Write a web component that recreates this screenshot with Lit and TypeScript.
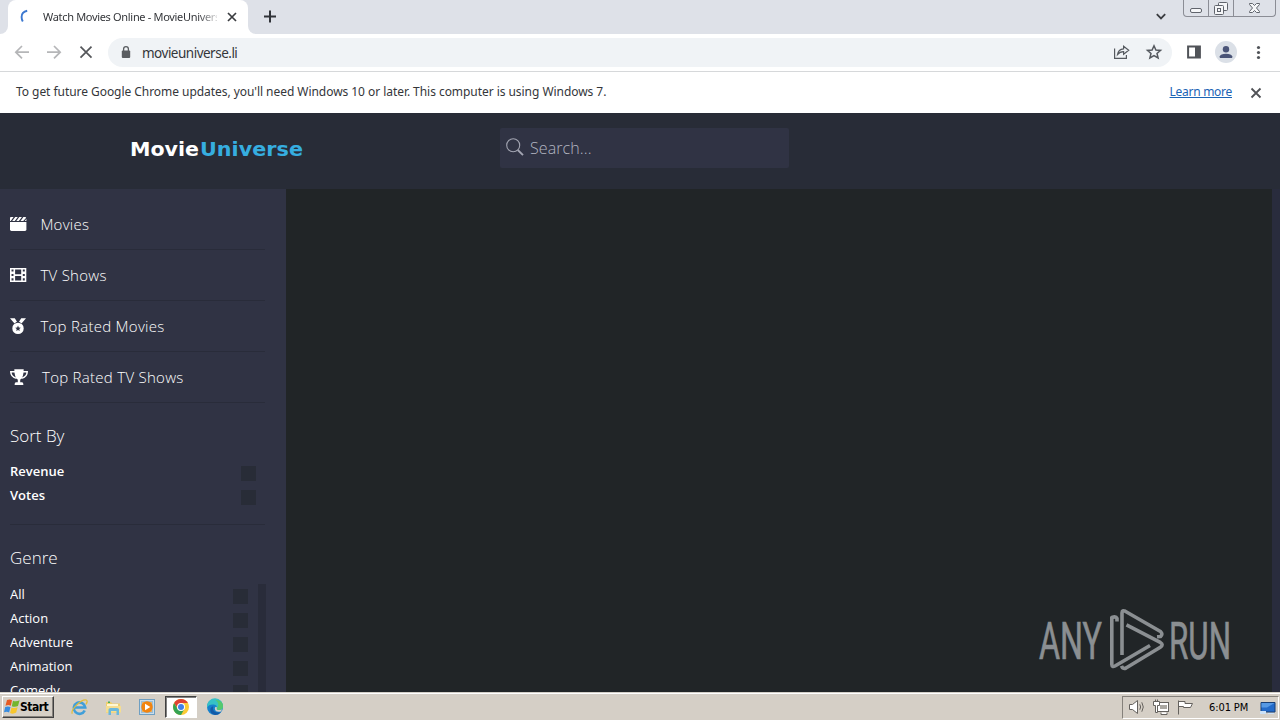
import {LitElement, html, css, svg} from 'lit';
import {customElement, property} from 'lit/decorators.js';

const menuIcons: Record<string, unknown> = {
  movies: svg`
    <path d="M0 4.9H16.4V12.6Q16.4 14 15 14H1.4Q0 14 0 12.6Z"/>
    <path d="M1 0H3.6L.7 3.9H0V1Q0 0 1 0ZM5.2 0H7.8L4.8 3.9H2.2ZM9.3 0H11.9L8.9 3.9H6.3ZM13.4 0H15.4L16.2.7 13.2 3.9H10.5ZM16.4 1.8V3.9H14.8Z"/>`,
  tv: svg`
    <path fill-rule="evenodd" d="M0 0H16.3V14H0ZM1.5 1.6V3.6H3.5V1.6ZM1.5 5.9V8H3.5V5.9ZM1.5 10.3V12.4H3.5V10.3ZM12.8 1.6V3.6H14.8V1.6ZM12.8 5.9V8H14.8V5.9ZM12.8 10.3V12.4H14.8V10.3ZM5.1 1.6V6.2H11.2V1.6ZM5.1 7.9V12.4H11.2V7.9Z"/>`,
  medal: svg`
    <path d="M0-.8H4.8L7 2.8Q5.6 3.3 4.5 4.4ZM11.2-.8H16L11.5 4.4Q10.4 3.3 9 2.8Z"/>
    <path fill-rule="evenodd" d="M8 3.7A5.7 5.7 0 1 1 8 15.1 5.7 5.7 0 0 1 8 3.7ZM8 6.6L7.2 8.5 5.2 8.7 6.7 10 6.3 12 8 11 9.7 12 9.3 10 10.8 8.7 8.8 8.5Z"/>`,
  trophy: svg`
    <path d="M4.3-.7H13.7Q13.6 8.2 10.2 9.7V12.2H12.2Q13.4 12.4 13.4 15H4.6Q4.6 12.4 5.8 12.2H7.8V9.7Q4.4 8.2 4.3-.7Z"/>
    <path d="M5 1.7H.8Q.8 6.8 6.6 8.4M13 1.7H17.2Q17.2 6.8 11.4 8.4" fill="none" stroke="#fff" stroke-width="1.5"/>`,
};

const links = [
  {icon: 'movies', label: 'Movies', width: 16.4},
  {icon: 'tv', label: 'TV Shows', width: 16.4},
  {icon: 'medal', label: 'Top Rated Movies', width: 16.4},
  {icon: 'trophy', label: 'Top Rated TV Shows', width: 18},
];

const sorts = ['Revenue', 'Votes'];
const genres = ['All', 'Action', 'Adventure', 'Animation', 'Comedy'];

@customElement('browser-chrome')
export class BrowserChrome extends LitElement {
  @property() tabTitle = '';
  @property() address = '';

  static styles = css`
    :host {
      display: block;
      flex: none;
      font-family: "Noto Sans", sans-serif;
      color: #34363a;
    }
    svg {
      display: block;
      flex: none;
      overflow: visible;
    }
    .tabs {
      height: 34px;
      background: #dee1e8;
      display: flex;
    }
    .before,
    .after {
      width: 8px;
      background: #fff;
    }
    .before i,
    .after i {
      display: block;
      height: 34px;
      background: #dee1e8;
    }
    .before i {
      border-bottom-right-radius: 8px;
    }
    .after i {
      border-bottom-left-radius: 8px;
    }
    .tab {
      width: 240px;
      box-sizing: border-box;
      padding: 0 11px 0 11px;
      background: #fff;
      border-radius: 8px 8px 0 0;
      display: flex;
      align-items: center;
    }
    .title {
      width: 174px;
      margin: 0 10px 0 8px;
      padding-bottom: 1px;
      white-space: nowrap;
      overflow: hidden;
      font-size: 11px;
      letter-spacing: -0.32px;
      -webkit-mask-image: linear-gradient(90deg, #000 155px, transparent 178px);
      mask-image: linear-gradient(90deg, #000 155px, transparent 178px);
    }
    .plus {
      margin: 10px 0 0 8px;
    }
    .grow {
      flex: 1;
    }
    .caret {
      margin: 12px 17px 0 0;
    }
    .window {
      width: 91px;
      height: 16px;
      margin-right: 4px;
      border: 1px solid #8b8d95;
      border-top: 0;
      border-radius: 0 0 4px 4px;
      display: flex;
    }
    .toolbar {
      height: 37px;
      background: #fff;
      border-bottom: 1px solid #d6d8da;
      display: flex;
      align-items: center;
    }
    .nav {
      width: 108px;
    }
    .omnibox {
      width: 1064px;
      height: 29px;
      box-sizing: border-box;
      padding: 0 10px 0 12px;
      border-radius: 15px;
      background: #f0f3f6;
      display: flex;
      align-items: center;
    }
    .address {
      margin-left: 10px;
      font-size: 13.5px;
      letter-spacing: -0.5px;
      flex: 1;
    }
    .infobar {
      height: 41px;
      box-sizing: border-box;
      background: #fff;
      padding: 0 19px 0 16px;
      display: flex;
      align-items: center;
      font-size: 12px;
    }
    .message {
      flex: 1;
      letter-spacing: -0.05px;
      padding-bottom: 2px;
    }
    .more {
      color: #1b63b5;
      text-decoration: underline;
      margin-right: 19px;
      padding-bottom: 2px;
      letter-spacing: -0.28px;
    }
  `;

  render() {
    return html`
      <div class="tabs">
        <div class="before"><i></i></div>
        <div class="tab">
          <svg width="16" height="16" viewBox="0 0 16 16"><path d="M8.2 1.8Q2.6 3 2.6 8 2.6 10.5 3.8 12.4" fill="none" stroke="#3c78d0" stroke-width="1.9"/></svg>
          <div class="title">${this.tabTitle}</div>
          <svg width="10" height="10" viewBox="0 0 10 10"><path d="M1 1L9 9M9 1L1 9" stroke="#3a3c40" stroke-width="1.7"/></svg>
        </div>
        <div class="after"><i></i></div>
        <svg class="plus" width="12" height="12" viewBox="0 0 12 12"><path d="M6 .5V12.5M0 6.5H12" stroke="#303338" stroke-width="2"/></svg>
        <div class="grow"></div>
        <svg class="caret" width="10" height="8" viewBox="0 0 10 8"><path d="M.8 2.2L5 6.4 9.2 2.2" fill="none" stroke="#3a3c40" stroke-width="1.8"/></svg>
        <div class="window">
          <svg width="91" height="16" viewBox="0 0 91 16" fill="#f5f6f8" stroke="#60646c">
            <path d="M24.5 0V16M49.5 0V16" stroke="#8b8d95"/>
            <rect x="6.5" y="8.5" width="11" height="4" rx="1.5"/>
            <rect x="34.5" y="2.5" width="9" height="8" rx="1"/>
            <rect x="30.5" y="5.5" width="9" height="9" rx="1"/>
            <rect x="33.5" y="8.5" width="3" height="3"/>
            <path d="M65.5 3.5H68.5L70.5 5.5 72.5 3.5H75.5V4.5L72.5 8 75.5 11.5V12.5H72.5L70.5 10.5 68.5 12.5H65.5V11.5L68.5 8 65.5 4.5Z"/>
          </svg>
        </div>
      </div>
      <div class="toolbar">
        <svg class="nav" width="108" height="37" viewBox="0 0 108 37" fill="none" stroke-width="1.7">
          <path d="M29 18.2H16M22 12L15.8 18.2 22 24.4M47 18.2H60M54 12L60.2 18.2 54 24.4" stroke="#b5b6b8"/>
          <path d="M80.5 12.7L91.5 23.7M91.5 12.7L80.5 23.7" stroke="#55575b"/>
        </svg>
        <div class="omnibox">
          <svg width="12" height="14" viewBox="0 0 12 14"><rect x="1.8" y="4.5" width="8.4" height="7.5" rx="1" fill="#5a5d61"/><path d="M3.6 5V3A2.4 2.4 0 0 1 8.4 3V5" fill="none" stroke="#5a5d61" stroke-width="1.3"/></svg>
          <span class="address">${this.address}</span>
          <svg width="48" height="18" viewBox="0 0 48 18" fill="none" stroke="#55595f" stroke-width="1.2">
            <path d="M.6 4.5V14.4H12.4V11M3.5 10.5Q4.3 5.2 9.6 4.8V2.2L14.7 6.3 9.6 10.2V7.7Q5.8 7.7 3.5 10.5Z"/>
            <path d="M40 1.8L41.9 6 46.5 6.4 43 9.4 44.1 13.9 40 11.5 35.9 13.9 37 9.4 33.5 6.4 38.1 6Z" stroke-width="1.5"/>
          </svg>
        </div>
        <svg width="108" height="37" viewBox="0 0 108 37">
          <path d="M16.1 12.4H27.9V23.6H16.1Z" fill="none" stroke="#505358" stroke-width="2"/><path d="M23 12H28V24H23Z" fill="#505358"/>
          <circle cx="54" cy="18" r="11" fill="#dbe0e7"/>
          <circle cx="54" cy="15.2" r="3.2" fill="#4b5578"/><path d="M47.8 24V22.2Q48.5 19.7 54 19.7T60.2 22.2V24Z" fill="#4b5578"/>
          <g fill="#505358"><circle cx="86.5" cy="13.5" r="1.6"/><circle cx="86.5" cy="18.5" r="1.6"/><circle cx="86.5" cy="23.5" r="1.6"/></g>
        </svg>
      </div>
      <div class="infobar">
        <span class="message">To get future Google Chrome updates, you'll need Windows 10 or later. This computer is using Windows 7.</span>
        <span class="more">Learn more</span>
        <svg width="10" height="10" viewBox="0 0 10 10"><path d="M.5.5L9.5 9.5M9.5.5L.5 9.5" stroke="#505256" stroke-width="1.8"/></svg>
      </div>
    `;
  }
}

@customElement('movie-page')
export class MoviePage extends LitElement {
  static styles = css`
    :host {
      display: flex;
      flex-direction: column;
      flex: 1;
      min-height: 0;
      background: #212527;
      color: #fff;
      font-family: "Open Sans", "Noto Sans", sans-serif;
      font-weight: 300;
    }
    svg {
      display: block;
      overflow: visible;
      flex: none;
    }
    .header {
      height: 76px;
      flex: none;
      background: #282c37;
      display: flex;
      align-items: flex-start;
    }
    .logo {
      margin: 22px 196px 0 130px;
    }
    .logo text {
      font: bold 20px "DejaVu Sans", sans-serif;
    }
    .search {
      width: 289px;
      height: 40px;
      margin-top: 15px;
      box-sizing: border-box;
      padding-left: 6px;
      background: #303344;
      border-radius: 2px;
      display: flex;
      align-items: center;
      gap: 6px;
      color: #b3b6c1;
      font-size: 16px;
      letter-spacing: 0.1px;
    }
    .body {
      flex: 1;
      min-height: 0;
      display: flex;
    }
    .sidebar {
      width: 286px;
      box-sizing: border-box;
      padding: 10px 20px 0 10px;
      background: #303344;
      overflow: hidden;
    }
    .link {
      height: 50px;
      margin-right: 1px;
      display: flex;
      align-items: center;
      gap: 14px;
      border-bottom: 1px solid #292c3a;
      font-size: 15px;
      letter-spacing: 0.28px;
    }
    .heading {
      height: 24px;
      line-height: 24px;
      font-size: 17px;
      padding: 21px 0 11px;
    }
    .sorts {
      height: 65px;
      margin-right: 1px;
      padding-right: 9px;
      border-bottom: 1px solid #292c3a;
      font-weight: 600;
    }
    .row {
      height: 24px;
      display: flex;
      align-items: center;
      justify-content: space-between;
      font-size: 13px;
    }
    .box {
      width: 15px;
      height: 15px;
      margin-top: 4px;
      background: #282c37;
    }
    .genres {
      height: 108px;
      margin-top: 3px;
      padding-right: 10px;
      border-right: 8px solid #292c3a;
      font-weight: 400;
      overflow: hidden;
    }
    .genres .row:first-child {
      margin-top: -2px;
    }
    .main {
      flex: 1;
      display: flex;
      align-items: flex-end;
      justify-content: flex-end;
    }
    .mark {
      margin: 0 40px 19px 0;
      fill: #8b8f92;
      stroke: #8b8f92;
    }
    .mark text {
      font: 52px Roboto, sans-serif;
      stroke-width: 0.7px;
    }
    .scrollbar {
      width: 8px;
      background: #292c3d;
    }
  `;

  row(label: string) {
    return html`<div class="row"><span>${label}</span><i class="box"></i></div>`;
  }

  render() {
    return html`
      <div class="header">
        <svg class="logo" width="174" height="28" viewBox="0 0 174 28">
          <text x="0" y="21" fill="#fff" textLength="69" lengthAdjust="spacingAndGlyphs">Movie</text>
          <text x="70" y="21" fill="#36aee0" textLength="103" lengthAdjust="spacingAndGlyphs">Universe</text>
        </svg>
        <div class="search">
          <svg width="18" height="20" viewBox="0 0 18 20" fill="none" stroke="#a3a5b2"><circle cx="7.2" cy="7.3" r="6.5" stroke-width="1.1"/><path d="M11.8 12L17 17.2" stroke-width="1.9"/></svg>
          <span>Search...</span>
        </div>
      </div>
      <div class="body">
        <div class="sidebar">
          ${links.map((link) => html`
            <div class="link">
              <svg width=${link.width} height="15" fill="#fff">${menuIcons[link.icon]}</svg>
              <span>${link.label}</span>
            </div>
          `)}
          <div class="heading">Sort By</div>
          <div class="sorts">${sorts.map((name) => this.row(name))}</div>
          <div class="heading">Genre</div>
          <div class="genres">${genres.map((name) => this.row(name))}</div>
        </div>
        <div class="main">
          <svg class="mark" width="194" height="64" viewBox="0 0 194 64">
            <text x="1" y="49.5" textLength="63" lengthAdjust="spacingAndGlyphs">ANY</text>
            <text x="131" y="49.5" textLength="62" lengthAdjust="spacingAndGlyphs">RUN</text>
            <g fill="none" stroke-width="3.6" stroke-linejoin="round">
              <path d="M79 12.5V9.5Q78 7 73.8 8.5V55.5Q74 58.6 77 57L112 36.5"/>
              <path d="M84 46V4Q84.2 .6 87.2 2.2L122.5 22.5Q125.3 25.2 122.5 27.5L119 27.7"/>
              <path d="M88.5 15.8L122.3 33.4Q126 35.8 122.3 38.2L88 59Q84.8 60.5 83.5 56.8"/>
            </g>
          </svg>
        </div>
        <div class="scrollbar"></div>
      </div>
    `;
  }
}

@customElement('task-bar')
export class TaskBar extends LitElement {
  static styles = css`
    :host {
      height: 27px;
      flex: none;
      display: flex;
      align-items: center;
      box-sizing: border-box;
      border-top: 1px solid #fff;
      box-shadow: 0 -1px #d4d0c8;
      margin-top: 1px;
      background: #d5cfc6;
      color: #000;
      font-family: "DejaVu Sans Condensed", "DejaVu Sans", sans-serif;
      padding-left: 2px;
    }
    svg {
      display: block;
      flex: none;
      overflow: visible;
    }
    .start {
      width: 52px;
      height: 22px;
      box-sizing: border-box;
      border: 1px solid #fff;
      border-right-color: #404040;
      border-bottom-color: #404040;
      box-shadow: inset -1px -1px #86827c;
      padding-left: 1px;
      display: flex;
      align-items: center;
      font-weight: bold;
      font-size: 12px;
      letter-spacing: -0.5px;
    }
    .apps {
      display: flex;
      align-items: center;
      margin-left: 9px;
    }
    .app {
      width: 32px;
      height: 22px;
      box-sizing: border-box;
      margin-right: 2px;
      display: flex;
      align-items: center;
      justify-content: center;
    }
    .active {
      background: #fff;
      border: 1px solid #404040;
      border-right-color: #fff;
      border-bottom-color: #fff;
      box-shadow: inset 1px 1px #808080;
    }
    .grow {
      flex: 1;
    }
    .tray {
      width: 157px;
      height: 23px;
      box-sizing: border-box;
      border: 1px solid #85817b;
      border-right-color: #fff;
      border-bottom-color: #fff;
      display: flex;
      align-items: center;
      padding-left: 6px;
      margin-right: 1px;
      font-size: 11px;
    }
    .clock {
      width: 41px;
      margin: 0 10px 0 14px;
      white-space: nowrap;
      letter-spacing: -0.1px;
    }
  `;

  render() {
    return html`
      <div class="start">
        <svg width="16" height="16" viewBox="0 0 16 16">
          <path d="M3 1Q6-.3 8 1.3L6.8 6.8Q4.5 5.4 1.5 6.8Z" fill="#e65a22"/>
          <path d="M9 1.7Q12 3 15.6 1.3L14 7Q11 8.5 7.8 7.2Z" fill="#73b52e"/>
          <path d="M1.2 8Q4 6.8 6.5 8.1L5.1 13.6Q3 12.1 0 13.3Z" fill="#378ce0"/>
          <path d="M7.5 8.5Q10.5 9.8 13.6 8.3L12.2 13.6Q9.2 15.4 6.1 14.1Z" fill="#f7c62d"/>
        </svg>
        <span>Start</span>
      </div>
      <div class="apps">
        <div class="app">
          <svg width="17" height="17" viewBox="0 0 17 17" fill="none">
            <path d="M13.7 11.5A5.7 5.7 0 1 1 14.2 8.5H4" stroke="#419fd9" stroke-width="2.7"/>
            <path d="M1.2 14.8C-.8 11 10.6-.5 15.3 1Q17.2 2 14.9 5.3" stroke="#e3bd39" stroke-width="1.3"/>
          </svg>
        </div>
        <div class="app">
          <svg width="17" height="17" viewBox="0 0 17 17">
            <path d="M1 3H6L7.5 4.5H15V14H1Z" fill="#eecf70"/><path d="M3 2.5H5V4H3Z" fill="#49ad58"/>
            <path d="M2 5H13V7H2Z" fill="#fff7d2"/><path d="M1 7H16V13.5H1Z" fill="#f5dd91"/>
            <path d="M3.5 16V10.5Q3.5 9 5.5 9H12Q14 9 14 10.5V16H11.5V12H6V16Z" fill="#6bb8dc"/>
          </svg>
        </div>
        <div class="app">
          <svg width="16" height="16" viewBox="0 0 16 16">
            <rect x=".5" y=".5" width="15" height="15" fill="#c8ddec" stroke="#6f9fc2"/>
            <rect x="2.5" y="2.5" width="11" height="11" fill="#e9b266" stroke="#9bbdd6"/>
            <circle cx="8" cy="8" r="5.7" fill="#f18410"/><path d="M6 4.8L11.3 8 6 11.2Z" fill="#fff"/>
          </svg>
        </div>
        <div class="app active">
          <svg width="16" height="16" viewBox="0 0 16 16">
            <circle cx="8" cy="8" r="8" fill="#fccb35"/>
            <path d="M1.1 4A8 8 0 0 1 14.9 4H8L5 9.8Z" fill="#df4234"/>
            <path d="M1.1 4A8 8 0 0 0 8 16L11.4 10 4.7 10Z" fill="#35a353"/>
            <circle cx="8" cy="8" r="4" fill="#fff"/><circle cx="8" cy="8" r="3" fill="#4280e8"/>
          </svg>
        </div>
        <div class="app">
          <svg width="16" height="16" viewBox="0 0 16 16">
            <circle cx="8" cy="8" r="8" fill="#1680cc"/>
            <path d="M0 7A8 8 0 0 1 16 7.5Q15.7 11 12 11 9.2 11 9.8 9.2 10.5 6 6.8 5.5 2 4.9 0 8.7Z" fill="#36c1c6"/>
            <path d="M8.5 1Q16 1 16 7.5 15.7 11 12 11 9.2 11 9.8 9.2 13.5 5 8.5 1Z" fill="#55c96e"/>
            <path d="M6.2 7.2Q4.5 14.3 13.8 13.4 11.3 16 8 16 2.4 14.5 3.4 9.7 4 7.7 6.2 7.2Z" fill="#145aa7"/>
            <path d="M9.8 9.2Q9 12 15 10.5L14 12.5Q8 13.8 7.8 9.2 8 8.3 9 7.8 10.2 8 9.8 9.2Z" fill="#d5cfc6"/>
          </svg>
        </div>
      </div>
      <div class="grow"></div>
      <div class="tray">
        <svg width="66" height="18" viewBox="0 0 66 18" fill="#fff" stroke="#65625e">
          <path d="M.5 6.5H3.5L8.5 2.5V15.5L3.5 11.5H.5Z"/>
          <path d="M10.8 6.3Q12.5 9 10.8 11.7M12.8 4.3Q15.8 9 12.8 13.7" fill="none"/>
          <rect x="28.5" y="4.5" width="11" height="9"/><path d="M31 7H38V11H31Z" fill="#aaa7a1" stroke="none"/>
          <path d="M32 14.5V16.5H38V14.5M24.5 3.5V7.5H26.5V14.5H28.5V7.5H30.5V3.5ZM26.5 1.5V4M28.5 1.5V4"/>
          <path d="M49.5 2.5V16.5M49.5 3.5H56V5.5H63.5L61.5 9.5H54.5V8.5H49.5"/>
        </svg>
        <span class="clock">6:01 PM</span>
        <svg width="16" height="15" viewBox="0 0 16 15"><path d="M1 2.5H15V12H1Z" fill="#246bc9" stroke="#173e75"/><path d="M1.5 3H14.5L7 7.5H1.5Z" fill="#5699e4"/><path d="M0 11H6V14H0ZM8 13H14V14H8Z" fill="#cce1f6"/></svg>
      </div>
    `;
  }
}

@customElement('app-root')
export class AppRoot extends LitElement {
  static styles = css`
    :host {
      display: flex;
      flex-direction: column;
      width: 1280px;
      height: 720px;
      overflow: hidden;
    }
  `;

  render() {
    return html`
      <browser-chrome tabTitle="Watch Movies Online - MovieUniverse" address="movieuniverse.li"></browser-chrome>
      <movie-page></movie-page>
      <task-bar></task-bar>
    `;
  }
}
